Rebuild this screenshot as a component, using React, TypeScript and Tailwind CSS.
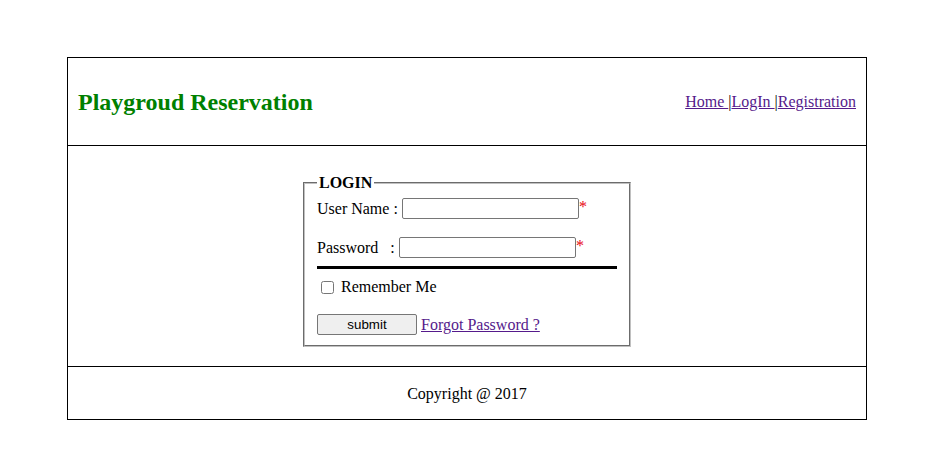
import React from "react";

export default function App() {
  const serif = { fontFamily: '"Liberation Serif", "Times New Roman", serif' };
  return (
    <div className="w-full min-h-[471px] bg-white text-black" style={serif}>
      <div className="pt-[57px] pl-[67px]">
        <div className="w-[800px] border border-black">
          <div className="h-[88px] flex items-center justify-between px-[10px] border-b border-black">
            <h2 className="text-[24px] font-bold text-[#008000] leading-[28px]">Playgroud Reservation</h2>
            <div className="text-[16px] leading-[18px] text-black">
              <a href="#" className="underline text-[#551a8b]">Home </a>|<a href="#" className="underline text-[#551a8b]">LogIn </a>|<a href="#" className="underline text-[#551a8b]">Registration</a>
            </div>
          </div>
          <div className="h-[220px] pt-[28px]">
            <fieldset className="w-[328px] mx-auto border-2 border-[#c0c0c0] [border-style:groove] px-[12px] pb-[10px] pt-0 m-0">
              <legend className="px-[2px] text-[16px] font-bold leading-[18px]">LOGIN</legend>
              <div className="mt-[6px] h-[21px] flex items-center text-[16px]">
                <span className="w-[85px] whitespace-pre">User Name : </span>
                <input type="text" className="w-[177px] h-[21px] border border-[#767676] rounded-[2px] bg-white" />
                <span className="text-red-600 self-start leading-[18px]">*</span>
              </div>
              <div className="mt-[18px] h-[21px] flex items-center text-[16px]">
                <span className="w-[82px] whitespace-pre">Password   : </span>
                <input type="password" className="w-[177px] h-[21px] border border-[#767676] rounded-[2px] bg-white" />
                <span className="text-red-600 self-start leading-[18px]">*</span>
              </div>
              <div className="mt-[8px] h-[3px] bg-black" />
              <div className="mt-[10px] h-[16px] flex items-center text-[16px]">
                <input type="checkbox" className="w-[13px] h-[13px] ml-[4px] mr-[7px] m-0" />
                <span>Remember Me</span>
              </div>
              <div className="mt-[19px] h-[21px] flex items-center">
                <button
                  type="button"
                  className="w-[100px] h-[21px] bg-[#efefef] border border-[#767676] rounded-[2px] text-[13.33px] leading-[15px]"
                  style={{ fontFamily: '"Liberation Sans", Arial, sans-serif' }}
                >
                  submit
                </button>
                <a href="#" className="ml-[4px] text-[16px] underline text-[#551a8b]">Forgot Password ?</a>
              </div>
            </fieldset>
          </div>
          <div className="h-[53px] border-t border-black flex items-center justify-center text-[16px] pt-[1px]">
            Copyright @ 2017
          </div>
        </div>
      </div>
    </div>
  );
}
